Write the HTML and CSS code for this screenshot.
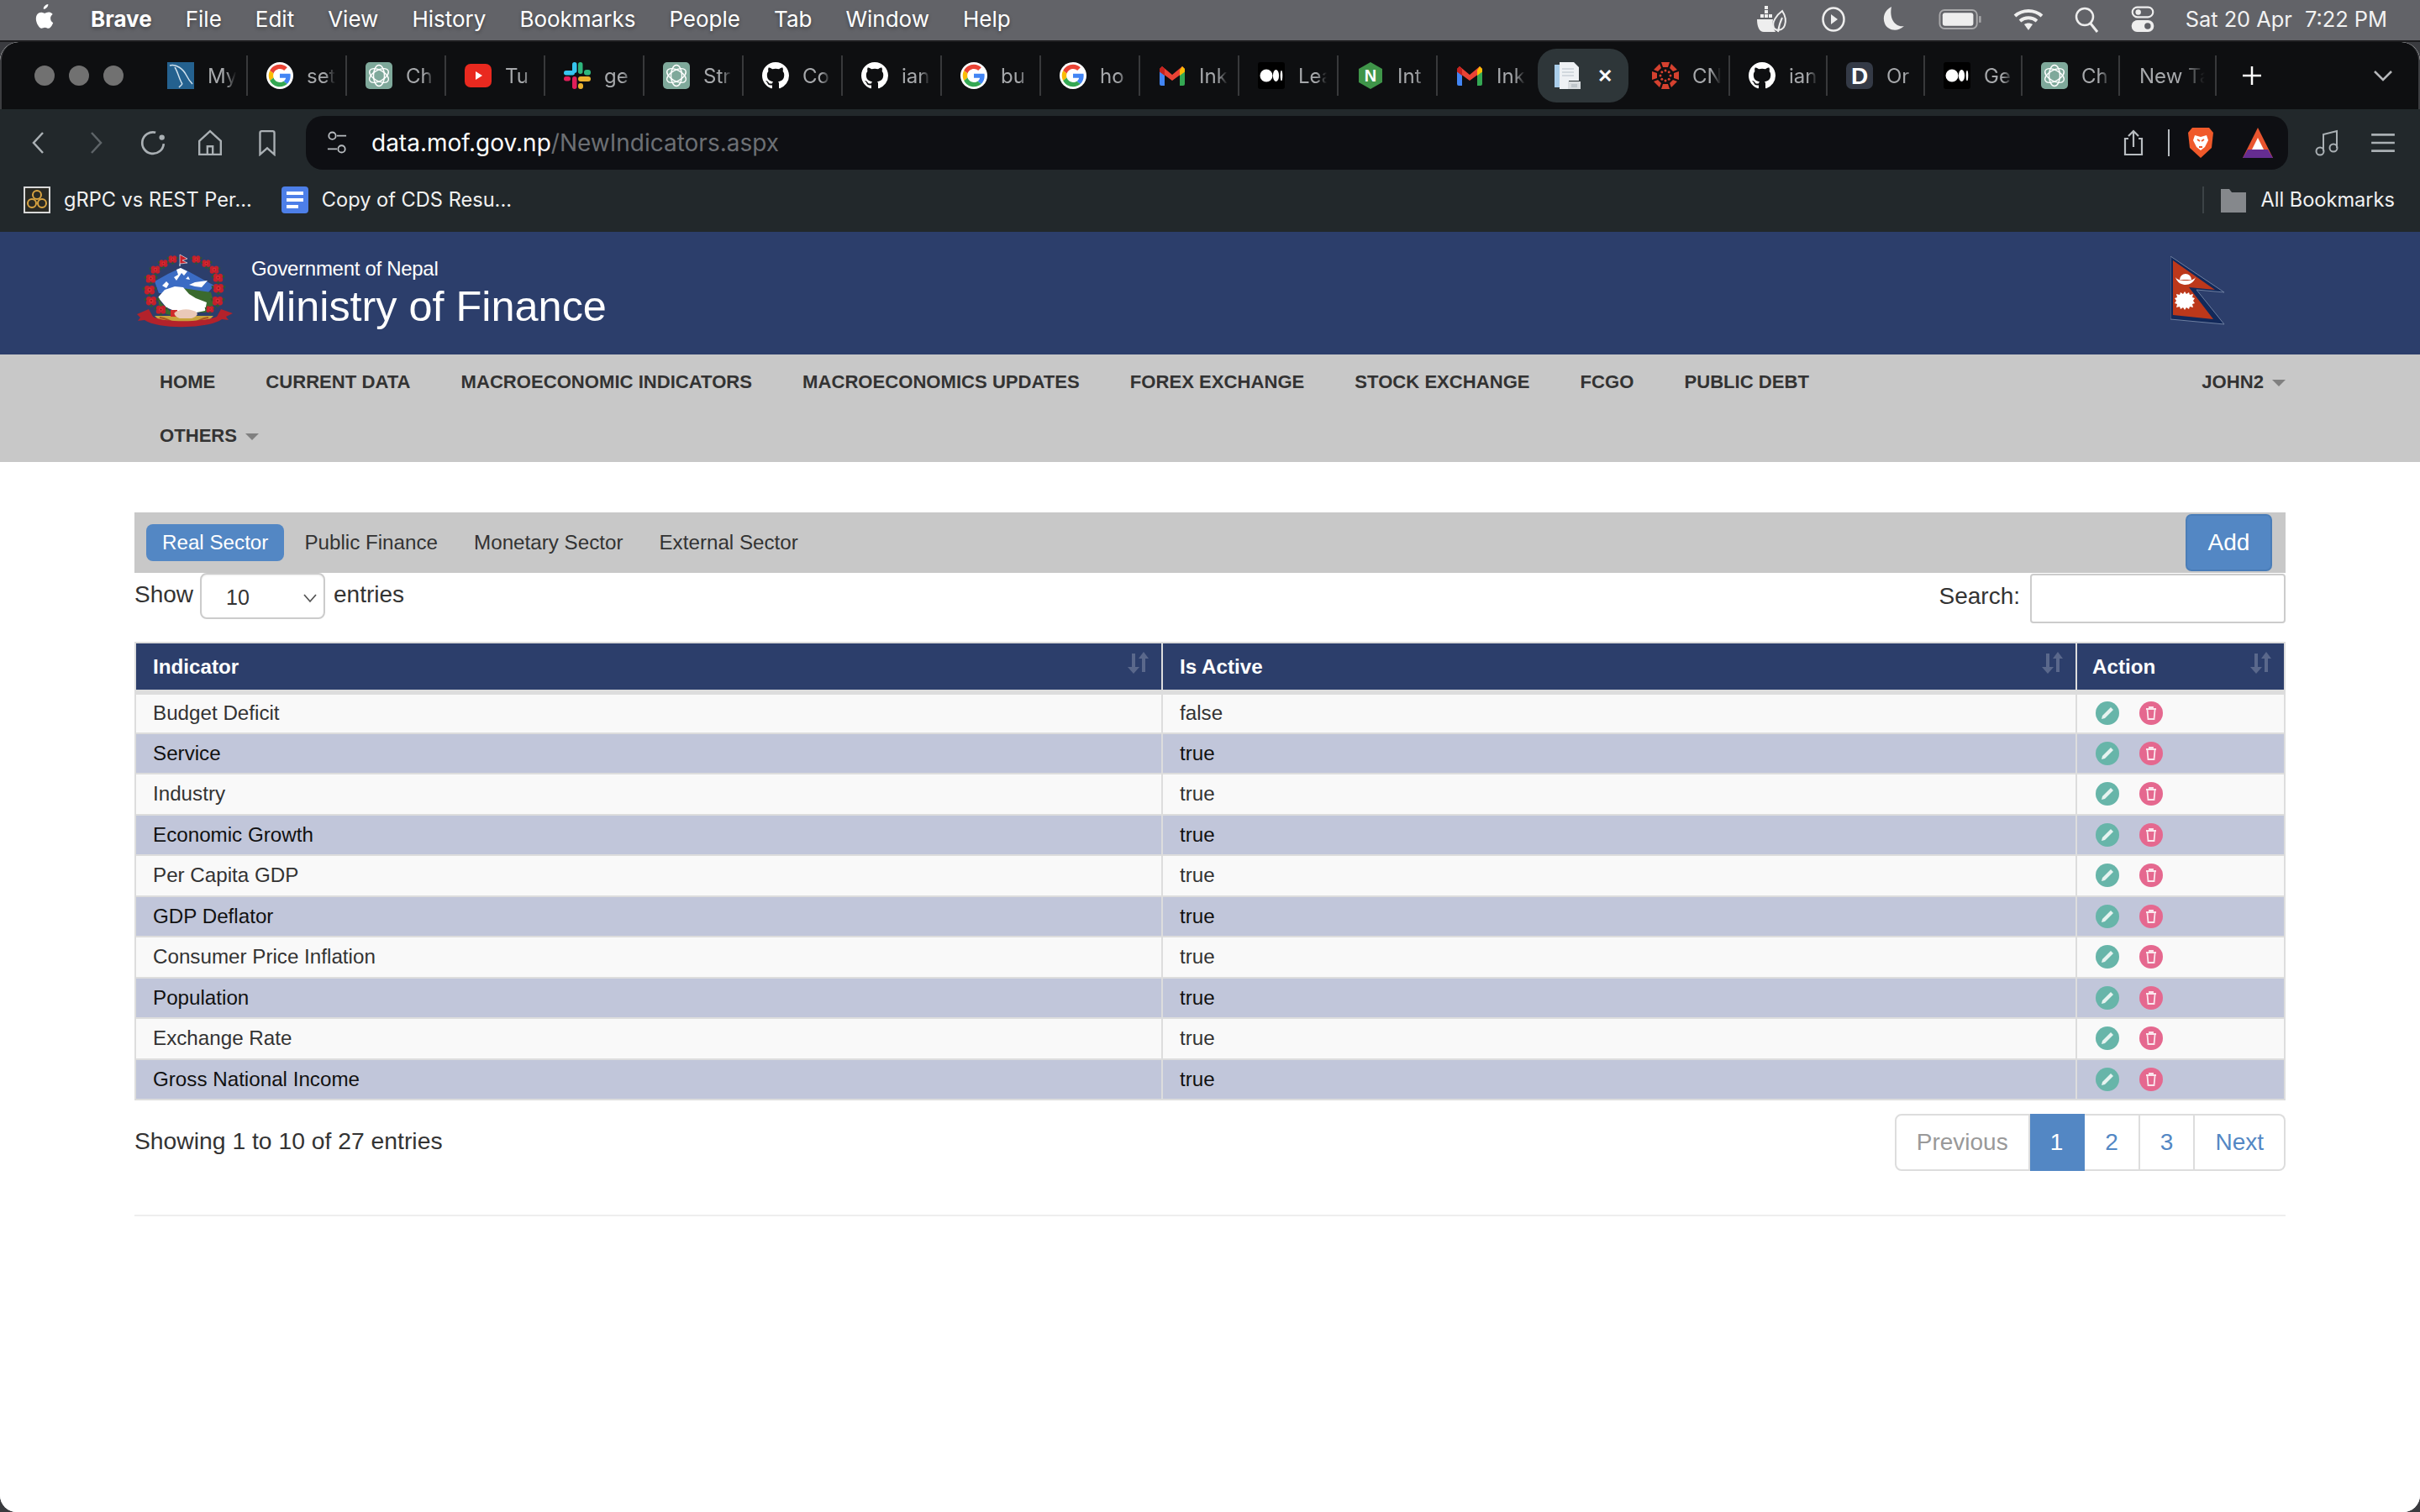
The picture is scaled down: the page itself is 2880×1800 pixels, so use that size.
FILE: index.html
```html
<!DOCTYPE html>
<html lang="en">
<head>
<meta charset="utf-8">
<title>Ministry of Finance</title>
<link rel="stylesheet" href="styles.css">
</head>
<body>
<svg class="sprite" aria-hidden="true">
  <defs>
    <symbol id="i-google" viewBox="-5 -5 58 58">
      <circle cx="24" cy="24" r="29" fill="#fff"/>
      <path fill="#EA4335" d="M24 9.5c3.54 0 6.71 1.22 9.21 3.6l6.85-6.85C35.9 2.38 30.47 0 24 0 14.62 0 6.51 5.38 2.56 13.22l7.98 6.19C12.43 13.72 17.74 9.5 24 9.5z"/>
      <path fill="#4285F4" d="M46.98 24.55c0-1.57-.15-3.09-.38-4.55H24v9.02h12.94c-.58 2.96-2.26 5.48-4.78 7.18l7.73 6c4.51-4.18 7.09-10.36 7.09-17.65z"/>
      <path fill="#FBBC05" d="M10.53 28.59c-.48-1.45-.76-2.99-.76-4.59s.27-3.14.76-4.59l-7.98-6.19C.92 16.46 0 20.12 0 24c0 3.88.92 7.54 2.56 10.78l7.97-6.19z"/>
      <path fill="#34A853" d="M24 48c6.48 0 11.93-2.13 15.89-5.81l-7.73-6c-2.15 1.45-4.92 2.3-8.16 2.3-6.26 0-11.57-4.22-13.47-9.91l-7.98 6.19C6.51 42.62 14.62 48 24 48z"/>
    </symbol>
    <symbol id="i-github" viewBox="0 0 16 16">
      <path fill="#fff" fill-rule="evenodd" d="M8 0C3.58 0 0 3.58 0 8c0 3.54 2.29 6.53 5.47 7.59.4.07.55-.17.55-.38 0-.19-.01-.82-.01-1.49-2.01.37-2.53-.49-2.69-.94-.09-.23-.48-.94-.82-1.13-.28-.15-.68-.52-.01-.53.63-.01 1.08.58 1.23.82.72 1.21 1.87.87 2.33.66.07-.52.28-.87.51-1.07-1.78-.2-3.64-.89-3.64-3.95 0-.87.31-1.59.82-2.15-.08-.2-.36-1.02.08-2.12 0 0 .67-.21 2.2.82.64-.18 1.32-.27 2-.27.68 0 1.36.09 2 .27 1.53-1.04 2.2-.82 2.2-.82.44 1.1.16 1.92.08 2.12.51.56.82 1.27.82 2.15 0 3.07-1.87 3.75-3.65 3.95.29.25.54.73.54 1.48 0 1.07-.01 1.93-.01 2.2 0 .21.15.46.55.38A8.013 8.013 0 0016 8c0-4.42-3.58-8-8-8z"/>
    </symbol>
    <symbol id="i-gpt" viewBox="0 0 32 32">
      <rect width="32" height="32" rx="5" fill="#7fa99b"/>
      <g fill="none" stroke="#fff" stroke-width="1.4">
        <ellipse cx="16" cy="16" rx="6.500" ry="12.500"/>
        <ellipse cx="16" cy="16" rx="6.500" ry="12.500" transform="rotate(60 16 16)"/>
        <ellipse cx="16" cy="16" rx="6.500" ry="12.500" transform="rotate(120 16 16)"/>
      </g>
    </symbol>
    <symbol id="i-gmail" viewBox="0 0 32 32">
      <path fill="#4285F4" d="M1 8h6v20H3a2 2 0 0 1-2-2z"/>
      <path fill="#34A853" d="M25 8h6v18a2 2 0 0 1-2 2h-4z"/>
      <path fill="#EA4335" d="M1 8l3-3 12 10 12-10 3 3v3l-15 11L1 11z"/>
      <path fill="#FBBC05" d="M25 9.5l3-4.5 3 3v3.5L25 16z"/>
      <path fill="#C5221F" d="M1 8l3-3 3 3v8l-6-4.500z"/>
    </symbol>
    <symbol id="i-medium" viewBox="0 0 32 32">
      <rect width="32" height="32" rx="3" fill="#000"/>
      <circle cx="10" cy="16" r="7.500" fill="#fff"/>
      <ellipse cx="21.500" cy="16" rx="3.600" ry="7" fill="#fff"/>
      <ellipse cx="28" cy="16" rx="1.300" ry="6.300" fill="#fff"/>
    </symbol>
    <symbol id="i-rose" viewBox="-8 -8 16 16" overflow="visible">
      <path d="M-7.500 1l-1 -4 4 .5zM7.500 1l1-4-4 .5zM0 8l-3-3h6z" fill="#2f5a2c"/>
      <circle cx="-2.800" cy="-2" r="3.100" fill="#c3202b"/>
      <circle cx="2.800" cy="-2" r="3.100" fill="#c3202b"/>
      <circle cx="-3" cy="2.300" r="3.100" fill="#c3202b"/>
      <circle cx="3" cy="2.300" r="3.100" fill="#c3202b"/>
      <circle cx="0" cy="0" r="2.600" fill="#d92c34"/>
      <circle cx="0" cy="0" r="1" fill="#8e1219"/>
    </symbol>
  </defs>
</svg>

<header class="menubar">
  <svg class="apple" viewBox="0 0 24 30"><path fill="#fff" d="M17 0c.2 2.500-2.300 5.600-5.200 5.400C11.500 2.800 14.200.2 17 0zM19.600 15.800c0-3 2.400-4.400 2.500-4.500-1.400-2-3.500-2.300-4.300-2.300-1.800-.2-3.600 1.100-4.500 1.100-1 0-2.400-1.100-3.900-1C7.300 9.100 5.400 10.200 4.400 12c-2.100 3.600-.5 9 1.500 12 1 1.400 2.200 3 3.700 3 1.500-.1 2-1 3.800-1 1.800 0 2.300 1 3.900 1 1.600 0 2.600-1.500 3.600-2.900 1.100-1.700 1.600-3.300 1.600-3.400-.1 0-2.900-1.200-2.900-4.900z"/></svg>
  <nav class="menu-items">
    <span class="menu-app">Brave</span><span>File</span><span>Edit</span><span>View</span><span>History</span><span>Bookmarks</span><span>People</span><span>Tab</span><span>Window</span><span>Help</span>
  </nav>
  <div class="status">
    <svg class="st st-docker" viewBox="0 0 38 34"><g fill="#eee"><rect x="10" y="1" width="4" height="4"/><rect x="10" y="6" width="4" height="4"/><rect x="5" y="11" width="4" height="4"/><rect x="10" y="11" width="4" height="4"/><rect x="15" y="11" width="4" height="4"/><path d="M1 17h19c-1 6 0 10 3 15H9c-5 0-8-6-8-15z"/></g><path d="M31 7c4 6 5 11 3 17-2 6-10 8-13 3-3-6 3-15 10-20zM26 32c1-7 3-13 5-17" fill="none" stroke="#eee" stroke-width="2"/></svg>
    <svg class="st st-play" viewBox="0 0 28 30"><ellipse cx="14" cy="15" rx="12.500" ry="13.500" fill="none" stroke="#eee" stroke-width="2.500"/><path d="M11 9l8 6-8 6z" fill="#eee"/></svg>
    <svg class="st st-moon" viewBox="0 0 28 32"><path d="M11 1C3 5 0 13 3 21c3 8 15 11 23 3C16 26 8 16 11 1z" fill="#eee"/></svg>
    <svg class="st st-batt" viewBox="0 0 54 26"><rect x="1.500" y="1.500" width="46" height="23" rx="6" fill="none" stroke="#a9a9ab" stroke-width="2"/><rect x="5" y="5" width="38" height="16" rx="3" fill="#eee"/><rect x="50" y="9" width="2.500" height="8" fill="#a9a9ab"/></svg>
    <svg class="st st-wifi" viewBox="0 0 36 28"><g fill="none" stroke="#eee" stroke-width="4"><path d="M2 10c9-8 23-8 32 0"/><path d="M8 16c6-5 14-5 20 0"/></g><path d="M13 20c3-2 7-2 10 0l-5 7z" fill="#eee"/></svg>
    <svg class="st st-search" viewBox="0 0 30 32"><circle cx="13" cy="13" r="10" fill="none" stroke="#eee" stroke-width="2.500"/><path d="M20 21l8 10" stroke="#eee" stroke-width="3"/></svg>
    <svg class="st st-ctrl" viewBox="0 0 26 30"><rect x="1.500" y="1.500" width="23" height="11" rx="5.500" fill="none" stroke="#eee" stroke-width="2"/><circle cx="8" cy="7" r="3" fill="#eee"/><rect x="0.500" y="16" width="25" height="13" rx="6.500" fill="#eee"/><circle cx="18.500" cy="22.500" r="3.500" fill="#5f6066"/></svg>
    <span class="clock"><span class="clock-date">Sat 20 Apr</span><span>7:22 PM</span></span>
  </div>
</header>

<div class="window">
  <div class="tabstrip">
    <div class="lights"><i></i><i></i><i></i></div>
    <div class="tabs">
      <div class="tab"><svg class="fav" viewBox="0 0 32 32"><rect width="32" height="32" fill="#24618f"/><path d="M3 4c8-2 16 4 20 12 2 4 5 8 7 10M9 6c4 6 5 14 9 20M18 26l-4 4" fill="none" stroke="#cfe0ec" stroke-width="1.500"/></svg><span class="tab-label">My</span></div>
      <div class="tab"><svg class="fav"><use href="#i-google"/></svg><span class="tab-label">set</span></div>
      <div class="tab"><svg class="fav"><use href="#i-gpt"/></svg><span class="tab-label">Ch</span></div>
      <div class="tab"><svg class="fav" viewBox="0 0 32 32"><rect y="2" width="32" height="28" rx="7" fill="#e9291f"/><path d="M13 11l8 5-8 5z" fill="#fff"/></svg><span class="tab-label">Tu</span></div>
      <div class="tab"><svg class="fav" viewBox="0 0 32 32"><rect x="10" y="0" width="5.500" height="13" rx="2.700" fill="#36c5f0"/><rect x="0" y="10" width="13" height="5.500" rx="2.700" fill="#36c5f0"/><rect x="17" y="0" width="5.500" height="14" rx="2.700" fill="#2eb67d"/><rect x="24" y="9" width="8" height="6.500" rx="3" fill="#2eb67d"/><rect x="0" y="17" width="8" height="5.500" rx="2.700" fill="#e01e5a"/><rect x="10" y="17" width="5.500" height="15" rx="2.700" fill="#e01e5a"/><rect x="17" y="17" width="15" height="6" rx="3" fill="#ecb22e"/><rect x="17" y="25" width="6" height="7" rx="3" fill="#ecb22e"/></svg><span class="tab-label">ge</span></div>
      <div class="tab"><svg class="fav"><use href="#i-gpt"/></svg><span class="tab-label">Str</span></div>
      <div class="tab"><svg class="fav"><use href="#i-github"/></svg><span class="tab-label">Co</span></div>
      <div class="tab"><svg class="fav"><use href="#i-github"/></svg><span class="tab-label">ian</span></div>
      <div class="tab"><svg class="fav"><use href="#i-google"/></svg><span class="tab-label">bu</span></div>
      <div class="tab"><svg class="fav"><use href="#i-google"/></svg><span class="tab-label">ho</span></div>
      <div class="tab"><svg class="fav"><use href="#i-gmail"/></svg><span class="tab-label">Ink</span></div>
      <div class="tab"><svg class="fav"><use href="#i-medium"/></svg><span class="tab-label">Lea</span></div>
      <div class="tab"><svg class="fav" viewBox="0 0 32 32"><path d="M16 0l14 8v16l-14 8-14-8V8z" fill="#3f9549"/><text x="16" y="23" class="fav-letter">N</text></svg><span class="tab-label">Int</span></div>
      <div class="tab tab-plain"><svg class="fav"><use href="#i-gmail"/></svg><span class="tab-label">Ink</span></div>
      <div class="tab tab-active"><svg class="fav" viewBox="0 0 32 32"><path d="M1 3h6v27H1z" fill="#a9cdea"/><path d="M7 0h17l6 6v16H18v10H7z" fill="#eef1f4"/><path d="M10 8h14M10 12h14M10 16h14" stroke="#c9d0d6" stroke-width="1.500"/><rect x="17" y="23" width="15" height="9" fill="#d9dde0"/><rect x="21" y="26" width="7" height="4" fill="#bfc6cb"/></svg><span class="tab-close">✕</span></div>
      <div class="tab tab-n tab-canvas"><svg class="fav" viewBox="0 0 32 32"><g fill="#d5412f"><path d="M11 0h10l-2 6h-6zM11 32h10l-2-6h-6zM0 11v10l6-2v-6zM32 11v10l-6-2v-6z"/><path d="M23 2l7 7-5 2-4-4zM2 9l7-7 2 5-4 4zM9 30l-7-7 5-2 4 4zM30 23l-7 7-2-5 4-4z"/><circle cx="16" cy="10" r="1.500"/><circle cx="16" cy="22" r="1.500"/><circle cx="10" cy="16" r="1.500"/><circle cx="22" cy="16" r="1.500"/><circle cx="11.800" cy="11.800" r="1.500"/><circle cx="20.200" cy="11.800" r="1.500"/><circle cx="11.800" cy="20.200" r="1.500"/><circle cx="20.200" cy="20.200" r="1.500"/></g></svg><span class="tab-label">CN</span></div>
      <div class="tab tab-n"><svg class="fav"><use href="#i-github"/></svg><span class="tab-label">ian</span></div>
      <div class="tab tab-n"><svg class="fav" viewBox="0 0 32 32"><rect width="32" height="32" rx="7" fill="#343a46"/><text x="16" y="26" class="fav-d">D</text></svg><span class="tab-label">Or</span></div>
      <div class="tab tab-n"><svg class="fav"><use href="#i-medium"/></svg><span class="tab-label">Ge</span></div>
      <div class="tab tab-n"><svg class="fav"><use href="#i-gpt"/></svg><span class="tab-label">Ch</span></div>
      <div class="tab tab-n tab-new"><span class="tab-label tab-label-wide">New Ta</span></div>
    </div>
    <svg class="tab-plus" viewBox="0 0 24 24"><path d="M12 1v22M1 12h22" stroke="#fff" stroke-width="2.500"/></svg>
    <svg class="tab-list" viewBox="0 0 24 14"><path d="M2 2l10 10L22 2" fill="none" stroke="#b5b7ba" stroke-width="2.500"/></svg>
  </div>

  <div class="toolbar">
    <span class="tb"><svg class="tb-i" viewBox="0 0 20 28"><path d="M15 2L4 14l11 12" fill="none" stroke="#aab0b4" stroke-width="2.500"/></svg></span>
    <span class="tb"><svg class="tb-i" viewBox="0 0 20 28"><path d="M5 2l11 12L5 26" fill="none" stroke="#5e6468" stroke-width="2.500"/></svg></span>
    <span class="tb"><svg class="tb-i tb-w" viewBox="0 0 30 30"><path d="M18 3.500A12 12 0 1 0 27 16" fill="none" stroke="#aab0b4" stroke-width="2.500"/><circle cx="25" cy="9" r="3" fill="#aab0b4"/></svg></span>
    <span class="tb"><svg class="tb-i tb-w" viewBox="0 0 30 30"><path d="M3 13L15 2l12 11v15H3zM12 28v-9h6v9" fill="none" stroke="#aab0b4" stroke-width="2.200"/></svg></span>
    <span class="tb"><svg class="tb-i tb-w" viewBox="0 0 30 30"><path d="M7 28V4a2 2 0 0 1 2-2h12a2 2 0 0 1 2 2v24l-8-7z" fill="none" stroke="#aab0b4" stroke-width="2.200"/></svg></span>
    <div class="omnibox">
      <svg class="omni-tune" viewBox="0 0 26 32"><g fill="none" stroke="#b8bcc0" stroke-width="2"><circle cx="7" cy="7" r="4.500"/><path d="M13 7h12M1 24h12"/><circle cx="19" cy="24" r="4.500"/></g></svg>
      <span class="url"><span class="url-host">data.mof.gov.np</span><span class="url-path">/NewIndicators.aspx</span></span>
      <div class="omni-right">
        <svg class="omni-share" viewBox="0 0 26 32"><path d="M7 11H3v19h20V11h-4M13 21V2M7 8l6-6 6 6" fill="none" stroke="#b8bcc0" stroke-width="2.200"/></svg>
        <span class="omni-sep"></span>
        <svg class="omni-brave" viewBox="0 0 32 36"><path d="M6 0h20l5 6-2 18-13 12L3 24 1 6z" fill="#f0592a"/><path d="M9 9l7 2 7-2 2 6-4 8-5 4-5-4-4-8z" fill="#fff"/><path d="M12 14l3 2M20 14l-3 2M14 23h4" stroke="#f0592a" stroke-width="1.800"/></svg>
        <svg class="omni-rew" viewBox="0 0 36 36"><path d="M18 0l18 36H0z" fill="#e9552f"/><path d="M18 12l8 16H10z" fill="#fff"/><path d="M6 26h24l6 10H0z" fill="#662d91"/></svg>
      </div>
    </div>
    <span class="tb tb-r"><svg class="tb-i tb-w" viewBox="0 0 30 32"><path d="M10 26V6l16-4v20" fill="none" stroke="#aab0b4" stroke-width="2"/><circle cx="6" cy="26" r="4.500" fill="none" stroke="#aab0b4" stroke-width="2"/><circle cx="22" cy="22" r="4.500" fill="none" stroke="#aab0b4" stroke-width="2"/></svg></span>
    <span class="tb tb-r"><svg class="tb-i tb-w" viewBox="0 0 30 24"><path d="M2 3h26M2 12h26M2 21h26" stroke="#aab0b4" stroke-width="2.500"/></svg></span>
  </div>

  <div class="bookmarks">
    <div class="bm"><svg class="bm-i" viewBox="0 0 32 32"><rect x="1" y="1" width="30" height="30" fill="#2a2a24" stroke="#d8d8d8" stroke-width="2"/><g fill="none" stroke="#d9a441" stroke-width="2"><circle cx="16" cy="10" r="5"/><circle cx="10" cy="20" r="5"/><circle cx="22" cy="20" r="5"/></g></svg><span>gRPC vs REST Per...</span></div>
    <div class="bm"><svg class="bm-i" viewBox="0 0 32 32"><rect width="32" height="32" rx="4" fill="#4d7fe8"/><path d="M6 8h20M6 16h20M6 24h14" stroke="#fff" stroke-width="4"/></svg><span>Copy of CDS Resu...</span></div>
    <div class="bm-all"><svg class="bm-folder" viewBox="0 0 32 32"><path d="M1 3h10l3 4h17v24H1z" fill="#85888c"/></svg><span>All Bookmarks</span></div>
  </div>

  <div class="site">
    <div class="site-head">
      <div class="brand">
        <svg class="emblem" viewBox="0 0 114 88">
          <path d="M21 33L37 24 52 17l9 4 31 17-8 9H26z" fill="#3b6cc4"/>
          <path d="M47 19l5-2 8 4-4 5-3-3-6 9-3-4 5-3zM62 37l7-3 15-2-7 8-8-1zM30 38l5-5 3 3-3 5zM58 30l3-3 2 4z" fill="#fff"/>
          <path d="M54 41l34 5 4 14-10 10H58z" fill="#3a6a2e"/>
          <path d="M25 52l8-9 12-4 10 1 7 8 8 5 13 5-2 10-10 2H49l-14-6z" fill="#fff"/>
          <path d="M25 50l4 9 10 9 6 6-10-2-9-11z" fill="#3a6a2e"/>
          <path d="M21 74h70l-11 11H32z" fill="#c7a33c"/>
          <path d="M27 76c6 1 12 3 17 7M85 76c-6 1-12 3-17 7" fill="none" stroke="#a8541f" stroke-width="2"/>
          <path d="M40 67h8v8h-8z" fill="#cf2a2a"/>
          <path d="M45 70c8-5 19-5 26 0 3 3-3 6-6 7H51c-4-1-8-5-6-7z" fill="#eac9b8"/>
          <path d="M0 72l14-6 5 9c12 7 60 7 76 0l5-9 14 5-8 4 3 4-8-1c-14 11-74 13-92 1l-8 1 3-4z" fill="#b3222b"/>
          <use href="#i-rose" x="36" y="0" width="13" height="13"/>
          <use href="#i-rose" x="25" y="5" width="13" height="13"/>
          <use href="#i-rose" x="15" y="12" width="14" height="14"/>
          <use href="#i-rose" x="9" y="22" width="15" height="15"/>
          <use href="#i-rose" x="7" y="35" width="16" height="16"/>
          <use href="#i-rose" x="9" y="48" width="16" height="16"/>
          <use href="#i-rose" x="21" y="59" width="15" height="15"/>
          <use href="#i-rose" x="64" y="0" width="13" height="13"/>
          <use href="#i-rose" x="76" y="5" width="13" height="13"/>
          <use href="#i-rose" x="85" y="12" width="14" height="14"/>
          <use href="#i-rose" x="89" y="21" width="15" height="15"/>
          <use href="#i-rose" x="89" y="33" width="16" height="16"/>
          <use href="#i-rose" x="88" y="48" width="16" height="16"/>
          <use href="#i-rose" x="81" y="60" width="12" height="12"/>
          <path d="M51 1l9 5-6 2 6 3-9 1v3z" fill="#c8202a" stroke="#fff" stroke-width=".6"/>
        </svg>
        <div class="brand-text">
          <div class="brand-gov">Government of Nepal</div>
          <div class="brand-min">Ministry of Finance</div>
        </div>
      </div>
      <svg class="flag" viewBox="0 0 65 82">
        <path d="M0 0l64 43-33-3 33 41L0 75z" fill="#12295a" stroke="#6e7fa0" stroke-width="1"/>
        <path d="M3 5l50 35-31-3 29 38-48-5z" fill="#bc381b"/>
        <path d="M6 25c2 7 8 9 12 9 5 0 10-3 12-9-2 3-6 4-12 4s-10-1-12-4z" fill="#fff"/>
        <path d="M11 28a7 7 0 0 1 14 0z" fill="#fff"/>
        <path d="M17 42l2 3 3-2 1 3 4-1-1 4 3 1-2 3 2 3-3 1 1 4-4-1-1 3-3-2-2 3-2-3-3 2-1-3-4 1 1-4-3-1 2-3-2-3 3-1-1-4 4 1 1-3 3 2z" fill="#fff"/>
      </svg>
    </div>

    <nav class="site-nav">
      <ul class="nav-list">
        <li>HOME</li><li>CURRENT DATA</li><li>MACROECONOMIC INDICATORS</li><li>MACROECONOMICS UPDATES</li><li>FOREX EXCHANGE</li><li>STOCK EXCHANGE</li><li>FCGO</li><li>PUBLIC DEBT</li><li class="nav-user">JOHN2<b class="caret"></b></li><li class="nav-others">OTHERS<b class="caret"></b></li>
      </ul>
    </nav>

    <main class="content">
      <div class="subtabs">
        <span class="pill pill-active">Real Sector</span><span class="pill">Public Finance</span><span class="pill">Monetary Sector</span><span class="pill">External Sector</span>
        <button class="btn-add" type="button">Add</button>
      </div>

      <div class="dt-top">
        <div class="dt-length"><span>Show</span><span class="select"><span>10</span><svg class="select-arrow" viewBox="0 0 18 12"><path d="M2 2l7 8 7-8" fill="none" stroke="#555" stroke-width="1.800"/></svg></span><span>entries</span></div>
        <div class="dt-search"><span>Search:</span><span class="search-box"></span></div>
      </div>

      <table class="grid">
        <thead>
          <tr>
            <th class="col-a"><div class="th-in"><span>Indicator</span><svg class="sort"><use href="#i-sort"/></svg></div></th>
            <th class="col-b"><div class="th-in"><span>Is Active</span><svg class="sort"><use href="#i-sort"/></svg></div></th>
            <th class="col-c"><div class="th-in"><span>Action</span><svg class="sort"><use href="#i-sort"/></svg></div></th>
          </tr>
        </thead>
        <tbody>
          <tr><td>Budget Deficit</td><td>false</td><td><div class="acts"><svg class="act"><use href="#i-edit"/></svg><svg class="act"><use href="#i-del"/></svg></div></td></tr>
          <tr><td>Service</td><td>true</td><td><div class="acts"><svg class="act"><use href="#i-edit"/></svg><svg class="act"><use href="#i-del"/></svg></div></td></tr>
          <tr><td>Industry</td><td>true</td><td><div class="acts"><svg class="act"><use href="#i-edit"/></svg><svg class="act"><use href="#i-del"/></svg></div></td></tr>
          <tr><td>Economic Growth</td><td>true</td><td><div class="acts"><svg class="act"><use href="#i-edit"/></svg><svg class="act"><use href="#i-del"/></svg></div></td></tr>
          <tr><td>Per Capita GDP</td><td>true</td><td><div class="acts"><svg class="act"><use href="#i-edit"/></svg><svg class="act"><use href="#i-del"/></svg></div></td></tr>
          <tr><td>GDP Deflator</td><td>true</td><td><div class="acts"><svg class="act"><use href="#i-edit"/></svg><svg class="act"><use href="#i-del"/></svg></div></td></tr>
          <tr><td>Consumer Price Inflation</td><td>true</td><td><div class="acts"><svg class="act"><use href="#i-edit"/></svg><svg class="act"><use href="#i-del"/></svg></div></td></tr>
          <tr><td>Population</td><td>true</td><td><div class="acts"><svg class="act"><use href="#i-edit"/></svg><svg class="act"><use href="#i-del"/></svg></div></td></tr>
          <tr><td>Exchange Rate</td><td>true</td><td><div class="acts"><svg class="act"><use href="#i-edit"/></svg><svg class="act"><use href="#i-del"/></svg></div></td></tr>
          <tr><td>Gross National Income</td><td>true</td><td><div class="acts"><svg class="act"><use href="#i-edit"/></svg><svg class="act"><use href="#i-del"/></svg></div></td></tr>
        </tbody>
      </table>

      <div class="dt-bottom">
        <div class="dt-info">Showing 1 to 10 of 27 entries</div>
        <div class="pager">
          <span class="pg pg-off">Previous</span><span class="pg pg-on">1</span><span class="pg">2</span><span class="pg">3</span><span class="pg">Next</span>
        </div>
      </div>
      <hr class="rule">
    </main>
  </div>
</div>

<svg class="sprite" aria-hidden="true">
  <defs>
    <symbol id="i-sort" viewBox="0 0 26 26">
      <path d="M6 2h4v16h5l-7 8-7-8h5z" fill="#fff" fill-opacity=".22"/>
      <path d="M20 0l6 8h-4v16h-4V8h-4z" fill="#fff" fill-opacity=".22"/>
    </symbol>
    <symbol id="i-edit" viewBox="0 0 28 28">
      <circle cx="14" cy="14" r="14" fill="#67b5a9"/>
      <path d="M7 21l1-4L18 7l3 3-10 10z" fill="#e6f3f0"/>
    </symbol>
    <symbol id="i-del" viewBox="0 0 28 28">
      <circle cx="14" cy="14" r="14" fill="#e5688f"/>
      <path d="M8 9h12M12 8.500V7h4v1.500M9.500 10l1 11h7l1-11" fill="none" stroke="#fbe6ed" stroke-width="1.800"/>
    </symbol>
  </defs>
</svg>
</body>
</html>
```
FILE: styles.css
```css
* { box-sizing: border-box; }
html, body { margin: 0; height: 1800px; overflow: hidden; background: #3a3b3f; }
body { font-family: "Liberation Sans", Arial, sans-serif; color: #333; }
.sprite { position: absolute; width: 0; height: 0; }

/* macOS menu bar */
.menubar { height: 50px; display: flex; align-items: center; background: #626368; border-bottom: 2px solid #1c1c1e; color: #fff; font-family: Inter, "Liberation Sans", sans-serif; font-size: 26px; padding: 0 39px 3px 39px; }
.apple { width: 26px; height: 32px; margin-right: 43px; margin-top: -3px; }
.menu-items { display: flex; gap: 40px; text-shadow: 0 2px 4px rgba(0,0,0,.35); }
.menu-app { font-weight: 700; }
.status { margin-left: auto; display: flex; align-items: center; }
.st { display: block; height: 32px; }
.st-docker { width: 38px; margin-right: 40px; height: 36px; }
.st-play { width: 28px; margin-right: 44px; }
.st-moon { width: 28px; margin-right: 39px; }
.st-batt { width: 52px; margin-right: 37px; height: 26px; }
.st-wifi { width: 36px; margin-right: 36px; height: 28px; }
.st-search { width: 30px; margin-right: 38px; }
.st-ctrl { width: 28px; margin-right: 37px; }
.clock { display: flex; gap: 15px; color: #f2f2f2; font-size: 25.400px; }

/* browser window */
.window { height: 1750px; background: #fff; border-radius: 22px 22px 20px 20px; overflow: hidden; display: flex; flex-direction: column; }
.tabstrip { height: 80px; flex: none; background: #0e0f11; display: flex; align-items: center; padding-left: 39px; border-left: 2px solid #3c3d40; border-right: 2px solid #3c3d40; border-radius: 22px 22px 0 0; }
.lights { display: flex; gap: 17px; width: 136px; }
.lights i { width: 24px; height: 24px; border-radius: 50%; background: #717171; }
.tabs { display: flex; align-items: center; }
.tab { width: 118px; height: 48px; flex: none; display: flex; align-items: center; gap: 16px; padding-left: 22px; border-right: 2px solid #38393b; color: #a6a8ab; font-family: Inter, "Liberation Sans", sans-serif; font-size: 24px; }
.fav { width: 32px; height: 32px; flex: none; display: block; }
.fav-letter { font: 700 20px "Liberation Sans", sans-serif; fill: #fff; text-anchor: middle; }
.fav-d { font: 700 28px "Liberation Sans", sans-serif; fill: #fff; text-anchor: middle; }
.tab-label { display: block; width: 34px; overflow: hidden; white-space: nowrap; -webkit-mask-image: linear-gradient(90deg, #000 65%, transparent); mask-image: linear-gradient(90deg, #000 65%, transparent); }
.tab-label-wide { width: 78px; }
.tab-plain { border-right: 0; width: 119px; }
.tab-active { width: 108px; height: 64px; background: #2e3639; border: 0; border-radius: 22px; padding-left: 19px; gap: 20px; }
.tab-close { color: #fff; font-size: 22px; font-weight: 700; }
.tab-n { width: 116px; }
.tab-canvas { width: 121px; padding-left: 28px; }
.tab-new { padding-left: 23px; width: 115px; }
.tab-plus { width: 24px; height: 24px; margin-left: 30px; }
.tab-list { width: 24px; height: 14px; margin-left: 132px; }

.toolbar { height: 72px; flex: none; background: #22282b; display: flex; align-items: center; padding: 8px 11px 0 12px; }
.tb { width: 68px; height: 64px; flex: none; display: flex; align-items: center; justify-content: center; }
.tb-r { width: 66px; }
.tb-i { width: 20px; height: 28px; display: block; }
.tb-w { width: 32px; height: 32px; }
.omnibox { flex: 1; height: 64px; margin-left: 12px; margin-right: 14px; background: #0e0f13; border-radius: 20px; display: flex; align-items: center; padding: 0 18px 0 25px; }
.omni-tune { width: 24px; height: 30px; margin-right: 29px; }
.url { font-family: Inter, "Liberation Sans", sans-serif; font-size: 28px; }
.url-host { color: #fff; }
.url-path { color: #6c6f74; }
.omni-right { margin-left: auto; display: flex; align-items: center; }
.omni-share { width: 26px; height: 32px; }
.omni-sep { width: 2px; height: 32px; background: #b8bcc0; margin: 0 21px 0 28px; }
.omni-brave { width: 32px; height: 36px; }
.omni-rew { width: 36px; height: 36px; margin-left: 34px; }

.bookmarks { height: 74px; flex: none; background: #22282b; display: flex; align-items: center; padding: 0 30px 3px 28px; color: #f1f1f1; font-family: Inter, "Liberation Sans", sans-serif; font-size: 23.600px; }
.bm { display: flex; align-items: center; gap: 16px; margin-right: 35px; }
.bm-i { width: 32px; height: 32px; flex: none; }
.bm-all { margin-left: auto; display: flex; align-items: center; gap: 16px; border-left: 2px solid #3c4346; padding-left: 19px; height: 32px; }
.bm-folder { width: 32px; height: 32px; }

/* site */
.site { flex: 1; background: #fff; }
.site-head { height: 146px; background: #2c3e6b; display: flex; align-items: center; justify-content: space-between; padding: 0 232px 6px 163px; }
.brand { display: flex; align-items: center; gap: 22px; }
.emblem { width: 114px; height: 88px; display: block; }
.brand-text { color: #fff; padding-top: 8px; }
.brand-gov { font-size: 24px; line-height: 30px; letter-spacing: -.3px; }
.brand-min { font-size: 50.400px; line-height: 60px; }
.flag { width: 65px; height: 82px; }

.site-nav { height: 128px; background: #c8c8c8; padding: 0 160px; }
.nav-list { list-style: none; margin: 0; padding: 0; display: flex; flex-wrap: wrap; }
.nav-list li { height: 64px; line-height: 65px; padding: 0 30px; font-size: 22.100px; font-weight: 700; color: #333; white-space: nowrap; }
.nav-list .nav-user { margin-left: auto; padding-right: 0; }
.nav-list .nav-others { margin-right: 2000px; }
.caret { display: inline-block; margin-left: 10px; border: 8px solid transparent; border-top-color: #808080; border-bottom: 0; vertical-align: middle; }

.content { padding: 60px 160px 0; }
.subtabs { height: 72px; background: #c8c8c8; display: flex; align-items: center; padding: 0 16px 0 14px; gap: 5px; font-size: 24.200px; }
.pill { height: 44px; line-height: 44px; padding: 0 19px; border-radius: 8px; color: #333; white-space: nowrap; }
.pill-active { background: #5387c4; color: #fff; }
.btn-add { margin-left: auto; width: 103px; height: 68px; background: #5387c4; border: 2px solid #4a7db8; border-radius: 7px; color: #fff; font: 28px "Liberation Sans", sans-serif; padding: 0; }

.dt-top { height: 60px; display: flex; justify-content: space-between; font-size: 28px; }
.dt-length { display: flex; align-items: flex-start; gap: 8px; line-height: 52px; }
.select { width: 149px; height: 55px; border: 2px solid #ccc; border-radius: 8px; display: flex; align-items: center; padding: 4px 7px 0 29px; justify-content: space-between; font-size: 25px; line-height: 1; box-shadow: inset 0 1px 2px rgba(0,0,0,.08); margin-right: 2px; }
.select-arrow { width: 18px; height: 12px; }
.dt-search { display: flex; align-items: flex-start; gap: 12px; line-height: 54px; padding-top: 1px; }
.search-box { width: 304px; height: 59px; border: 2px solid #ccc; border-radius: 4px; background: #fff; }

.grid { width: 2560px; margin-top: 22px; border-collapse: collapse; table-layout: fixed; font-size: 24.200px; }
.grid th { background: #2c3e6b; color: #fff; text-align: left; padding: 0 20px; height: 59px; border: 2px solid #ddd; border-bottom-width: 6px; font-weight: 700; vertical-align: top; }
.col-a { width: 1222px; }
.col-b { width: 1088px; }
.grid .col-c { padding-left: 18px; }
.th-in { display: flex; justify-content: space-between; height: 54px; line-height: 56px; margin-right: -5px; }
.sort { width: 26px; height: 26px; margin-top: 10px; }
.grid td { height: 48.500px; padding: 0 20px; border: 2px solid #ddd; }
.grid tbody tr:nth-child(odd) { background: #f9f9f9; color: #333; }
.grid tbody tr:nth-child(even) { background: #c1c6da; color: #111; }
.acts { display: flex; gap: 24px; padding-left: 2px; }
.act { width: 28px; height: 28px; display: block; }

.dt-bottom { display: flex; justify-content: space-between; margin-top: 16px; font-size: 28px; }
.dt-info { line-height: 64px; font-size: 28.300px; }
.pager { display: flex; height: 68px; line-height: 64px; }
.pg { padding: 0 24px; border: 2px solid #ddd; border-left-width: 0; color: #5387c4; background: #fff; white-space: nowrap; }
.pg:first-child { border-left-width: 2px; border-radius: 8px 0 0 8px; }
.pg:last-child { border-radius: 0 8px 8px 0; }
.pg-off { color: #999; }
.pg-on { background: #5387c4; border-color: #5387c4; color: #fff; }
.rule { margin: 52px 0 0; border: 0; border-top: 2px solid #eee; }
```
